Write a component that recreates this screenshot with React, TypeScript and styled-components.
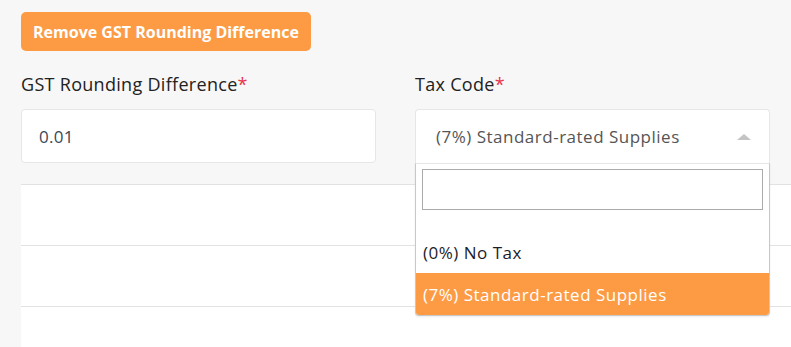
import styled, { createGlobalStyle } from "styled-components";

const GlobalStyle = createGlobalStyle`
  html, body {
    margin: 0;
    padding: 0;
    background-color: #f7f7f7;
    font-family: "Open Sans", "Noto Sans", sans-serif;
  }
`;

const Page = styled.div`
  width: 791px;
  height: 347px;
  overflow: hidden;
  padding: 12px 0 0 21px;
  box-sizing: border-box;
  display: flex;
  flex-direction: column;
`;

const OrangeButton = styled.button`
  align-self: flex-start;
  height: 39px;
  padding: 0 12px;
  background-color: #fd9b45;
  border: none;
  border-radius: 5px;
  color: #fff;
  font-family: "Open Sans", sans-serif;
  font-weight: 700;
  font-size: 16px;
`;

const FormRow = styled.div`
  display: grid;
  grid-template-columns: 355px 355px;
  column-gap: 39px;
  margin-top: 21px;
`;

const Field = styled.div`
  position: relative;
  display: flex;
  flex-direction: column;
`;

const Label = styled.label`
  font-size: 18px;
  letter-spacing: 0.3px;
  line-height: 24px;
  color: #222;
  margin-bottom: 13px;
`;

const Required = styled.span`
  color: #e8334a;
`;

const TextBox = styled.div`
  height: 54px;
  display: flex;
  align-items: center;
  padding: 0 17px;
  background: #fff;
  border: 1px solid #e6e6e6;
  border-radius: 4px;
  box-sizing: border-box;
  font-size: 17px;
  letter-spacing: 0.3px;
  color: #3b4756;
`;

const SelectBox = styled.div`
  height: 54px;
  display: flex;
  align-items: center;
  justify-content: space-between;
  padding: 0 18px 0 20px;
  background: #fff;
  border: 1px solid #e6e6e6;
  border-bottom: none;
  border-radius: 4px 4px 0 0;
  box-sizing: border-box;
  font-size: 17px;
  letter-spacing: 0.5px;
  color: #555;
`;

const Caret = styled.span`
  width: 0;
  height: 0;
  border-left: 7px solid transparent;
  border-right: 7px solid transparent;
  border-bottom: 6px solid #c4c4c4;
`;

const Dropdown = styled.div`
  position: absolute;
  top: 100%;
  left: 0;
  right: 0;
  z-index: 2;
  background: #fff;
  border: 1px solid #c8c8c8;
  border-top-color: #e6e6e6;
  border-radius: 0 0 4px 4px;
  padding: 5px 0 0;
  box-shadow: 0 1px 2px rgba(0, 0, 0, 0.08);
`;

const Search = styled.input`
  display: block;
  width: calc(100% - 12px);
  height: 41px;
  margin: 0 auto;
  border: 1px solid #aaa;
  box-sizing: border-box;
  outline: none;
`;

const Options = styled.ul`
  list-style: none;
  margin: 21px 0 0;
  padding: 0;
`;

const Option = styled.li<{ $active?: boolean }>`
  height: 42px;
  display: flex;
  align-items: center;
  padding: 0 7px;
  font-size: 17px;
  letter-spacing: 0.5px;
  color: ${(p) => (p.$active ? "#fff" : "#1c1c2b")};
  background: ${(p) => (p.$active ? "#fd9b45" : "transparent")};
  border-radius: ${(p) => (p.$active ? "0 0 3px 3px" : "0")};
`;

const Table = styled.div`
  flex: 1;
  margin-top: 21px;
  background: #fff;
`;

const TableRow = styled.div`
  height: 60px;
  border-top: 1px solid #e2e2e2;
  &:last-child {
    border-bottom: 1px solid #e2e2e2;
  }
`;

const taxCodes = ["(0%) No Tax", "(7%) Standard-rated Supplies"];

const App = () => {
  return (
    <Page>
      <GlobalStyle />
      <OrangeButton>Remove GST Rounding Difference</OrangeButton>
      <FormRow>
        <Field>
          <Label>
            GST Rounding Difference<Required>*</Required>
          </Label>
          <TextBox>0.01</TextBox>
        </Field>
        <Field>
          <Label>
            Tax Code<Required>*</Required>
          </Label>
          <SelectBox>
            (7%) Standard-rated Supplies
            <Caret />
          </SelectBox>
          <Dropdown>
            <Search type="text" />
            <Options>
              {taxCodes.map((code, index) => (
                <Option key={code} $active={index === 1}>
                  {code}
                </Option>
              ))}
            </Options>
          </Dropdown>
        </Field>
      </FormRow>
      <Table>
        <TableRow />
        <TableRow />
      </Table>
    </Page>
  );
};

export default App;
